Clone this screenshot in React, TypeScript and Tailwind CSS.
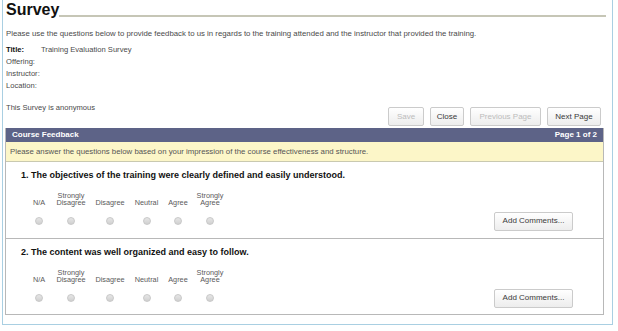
const options = ["N/A", "Strongly Disagree", "Disagree", "Neutral", "Agree", "Strongly Agree"];

const columns = [
  { label: "N/A", top: "", w: "w-[26px]" },
  { label: "Disagree", top: "Strongly", w: "w-[38px]" },
  { label: "Disagree", top: "", w: "w-[40px]" },
  { label: "Neutral", top: "", w: "w-[33px]" },
  { label: "Agree", top: "", w: "w-[30px]" },
  { label: "Agree", top: "Strongly", w: "w-[34px]" },
];

const Radio = () => (
  <span className="block h-[8px] w-[8px] rounded-full border border-[#c8c8c8] bg-gradient-to-b from-[#e6e6e6] to-[#d0d0d0]" />
);

const Button = ({ label, disabled, className }: { label: string; disabled?: boolean; className?: string }) => (
  <button
    className={`h-[19px] whitespace-nowrap rounded-[2px] border border-[#cbcbcb] bg-gradient-to-b from-white to-[#ededed] px-0 text-[8px] ${
      disabled ? "text-[#bcbcbc]" : "text-[#3a3a3a]"
    } ${className ?? ""}`}
  >
    {label}
  </button>
);

const Question = ({ num, text, last }: { num: number; text: string; last?: boolean }) => (
  <div className={`px-[15px] pt-[7px] ${last ? "h-[75px]" : "h-[77px] border-b border-[#b8b8b8]"}`}>
    <div className="text-[9px] font-bold text-[#111]">
      {num}. {text}
    </div>
    <div className="mt-[9px] flex items-end justify-between pr-[15px]">
      <div className="flex pl-[5px]">
        {columns.map((c, i) => (
          <div key={options[i]} className={`flex ${c.w} flex-col items-center`}>
            <div className="text-center text-[7.3px] leading-[7.6px] text-[#5a5a5a]">
              <div>{c.top || "\u00a0"}</div>
              <div>{c.label}</div>
            </div>
            <div className="mt-[10px]">
              <Radio />
            </div>
          </div>
        ))}
      </div>
      <Button label="Add Comments..." className="mb-[-6px] w-[79px]" />
    </div>
  </div>
);

export default function App() {
  return (
    <div className="h-[331px] w-[618px] overflow-hidden bg-white pl-[2px] font-['Liberation_Sans',Arial,sans-serif]">
      <div className="h-[325px] w-[611px] border-x border-b border-[#a9cfe2] pl-[2px] pr-[8px]">
        <div className="mr-[-2px] flex h-[20px] items-end pl-[1px]">
          <h1 className="text-[16px] font-bold leading-[20px] text-[#111]">Survey</h1>
          <div className="mb-[3px] h-[2px] flex-1 bg-[#c6c6b6]" />
        </div>
        <p className="mt-[9px] pl-[1px] text-[7.8px] leading-[10px] text-[#4a4a4a]">
          Please use the questions below to provide feedback to us in regards to the training attended and the instructor that provided the training.
        </p>
        <div className="mt-[5px] pl-[1px] text-[7.6px] leading-[12px] text-[#4a4a4a]">
          <div className="flex">
            <span className="w-[35px] font-bold text-[#111]">Title:</span>
            <span>Training Evaluation Survey</span>
          </div>
          <div>Offering:</div>
          <div>Instructor:</div>
          <div>Location:</div>
        </div>
        <div className="mt-[12px] flex items-start justify-between">
          <div className="pl-[1px] text-[7.6px] leading-[8px] text-[#4a4a4a]">This Survey is anonymous</div>
          <div className="mt-[3px] flex gap-[6px] pr-[3px]">
            <Button label="Save" disabled className="w-[36px]" />
            <Button label="Close" className="w-[34px]" />
            <Button label="Previous Page" disabled className="w-[71px]" />
            <Button label="Next Page" className="w-[54px]" />
          </div>
        </div>
        <div className="mt-[2px] border-x border-b border-[#b8b8b8]">
          <div className="flex h-[14px] items-center justify-between bg-[#5d6387] px-[6px] text-[8px] font-bold text-white">
            <span>Course Feedback</span>
            <span>Page 1 of 2</span>
          </div>
          <div className="flex h-[20px] items-center border-b border-[#c9c9b0] bg-[#fcf6c8] px-[4px] text-[7.8px] text-[#555]">
            Please answer the questions below based on your impression of the course effectiveness and structure.
          </div>
          <Question num={1} text="The objectives of the training were clearly defined and easily understood." />
          <Question num={2} text="The content was well organized and easy to follow." last />
        </div>
      </div>
    </div>
  );
}
